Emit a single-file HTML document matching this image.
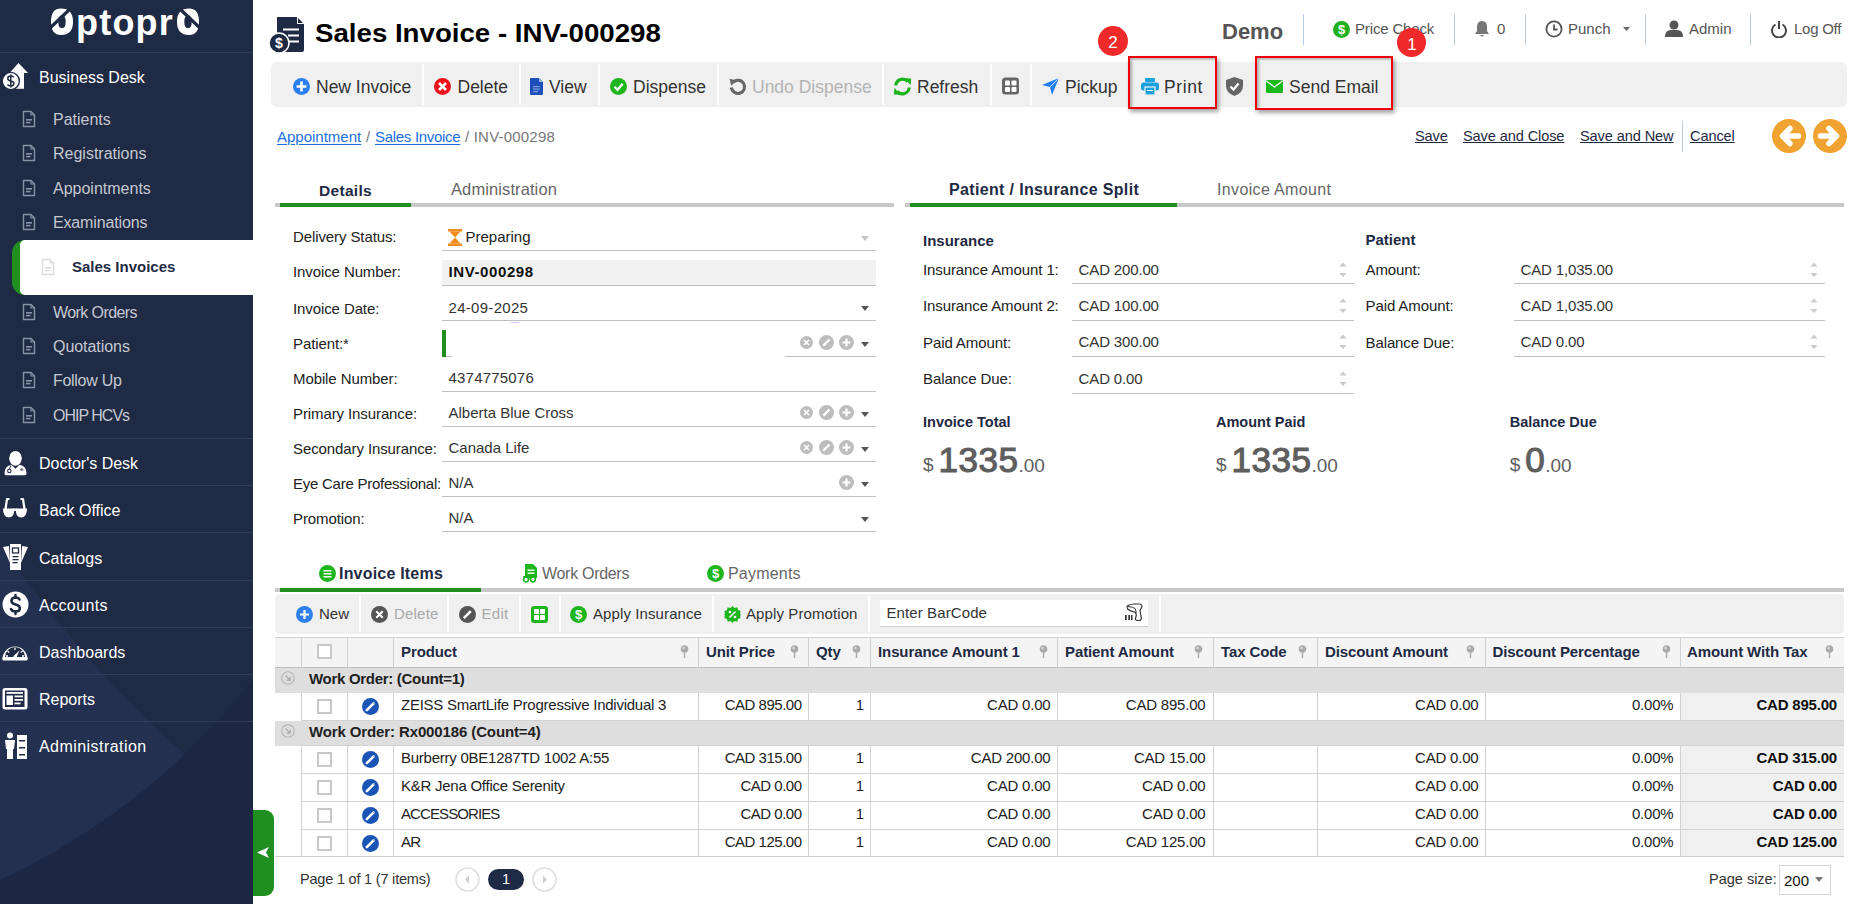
<!DOCTYPE html><html><head><meta charset="utf-8"><style>
html,body{margin:0;padding:0;width:1853px;height:904px;overflow:hidden;background:#fff;font-family:"Liberation Sans",sans-serif;}
.t{position:absolute;white-space:nowrap;}
.r{position:absolute;}
u{text-decoration:underline;text-underline-offset:2px;}
</style></head><body>
<div class="r" style="left:0;top:0;width:253px;height:904px;background:#1f2a44;overflow:hidden"><svg width="253" height="904" style="position:absolute;left:0;top:0"><path d="M0 545 Q120 715 253 808 L253 904 L0 904 Z" fill="#243050"/><path d="M0 880 Q150 810 253 679 L253 904 L0 904 Z" fill="#1d2744"/></svg></div>
<div class="t" style="left:76px;top:2.5px;font-size:36px;line-height:40px;font-weight:700;color:#fff;letter-spacing:1.2px">ptopr</div>
<svg class="r" style="left:50px;top:8px;" width="24" height="28" viewBox="0 0 24 28"><path fill-rule="evenodd" fill="#fff" d="M11 0.6 Q23 0.6 23 13.8 Q23 27 11 27 Q1 27 1 13.8 Q1 0.6 11 0.6 Z M12 7.3 Q15.7 7.3 15.7 13.8 Q15.7 20.3 12 20.3 Q8.3 20.3 8.3 13.8 Q8.3 7.3 12 7.3 Z"/><path d="M19.5 1.5 L0 20" stroke="#1f2a44" stroke-width="3.2"/></svg>
<svg class="r" style="left:176px;top:8px;" width="24" height="28" viewBox="0 0 24 28"><path fill-rule="evenodd" fill="#fff" d="M13 0.6 Q23 0.6 23 13.8 Q23 27 13 27 Q1 27 1 13.8 Q1 0.6 13 0.6 Z M12 7.3 Q15.7 7.3 15.7 13.8 Q15.7 20.3 12 20.3 Q8.3 20.3 8.3 13.8 Q8.3 7.3 12 7.3 Z"/><path d="M4.5 1.5 L24 20" stroke="#1f2a44" stroke-width="3.2"/></svg>
<div class="r" style="left:0px;top:52px;width:253px;height:1px;background:#2f3c5c;"></div>
<svg class="r" style="left:0px;top:62px;" width="28" height="28" viewBox="0 0 28 28"><path d="M18.5 1 L28 11 H24 V26.8 H13 V11 H9.5 Z" fill="#fff"/><circle cx="10.8" cy="19" r="8.6" fill="#fff" stroke="#1f2a44" stroke-width="1.4"/><path d="M13.8 15.3 Q13 14 10.8 14 Q7.8 14 7.8 16.4 Q7.8 18.3 10.8 18.9 Q13.9 19.5 13.9 21.6 Q13.9 24 10.8 24 Q8.3 24 7.5 22.4 M10.8 12.5 V25.5" fill="none" stroke="#1f2a44" stroke-width="1.5"/></svg>
<div class="t " style="left:39px;top:69.95px;font-size:16px;line-height:16px;color:#fff;">Business Desk</div>
<svg class="r" style="left:22px;top:110px;" width="14" height="18" viewBox="0 0 14 18"><path d="M1.5 1.5 H9 L12.5 5 V16.5 H1.5 Z" fill="none" stroke="#8a93a6" stroke-width="1.4" stroke-linejoin="round"/><path d="M9 1.5 V5 H12.5" fill="none" stroke="#8a93a6" stroke-width="1.2"/><rect x="4" y="9" width="6" height="1.6" fill="#8a93a6"/><rect x="4" y="11.8" width="4.5" height="1.6" fill="#8a93a6"/></svg>
<div class="t " style="left:53px;top:111.95px;font-size:16px;line-height:16px;color:#c4c8d2;">Patients</div>
<svg class="r" style="left:22px;top:144px;" width="14" height="18" viewBox="0 0 14 18"><path d="M1.5 1.5 H9 L12.5 5 V16.5 H1.5 Z" fill="none" stroke="#8a93a6" stroke-width="1.4" stroke-linejoin="round"/><path d="M9 1.5 V5 H12.5" fill="none" stroke="#8a93a6" stroke-width="1.2"/><rect x="4" y="9" width="6" height="1.6" fill="#8a93a6"/><rect x="4" y="11.8" width="4.5" height="1.6" fill="#8a93a6"/></svg>
<div class="t " style="left:53px;top:145.95px;font-size:16px;line-height:16px;color:#c4c8d2;">Registrations</div>
<svg class="r" style="left:22px;top:179px;" width="14" height="18" viewBox="0 0 14 18"><path d="M1.5 1.5 H9 L12.5 5 V16.5 H1.5 Z" fill="none" stroke="#8a93a6" stroke-width="1.4" stroke-linejoin="round"/><path d="M9 1.5 V5 H12.5" fill="none" stroke="#8a93a6" stroke-width="1.2"/><rect x="4" y="9" width="6" height="1.6" fill="#8a93a6"/><rect x="4" y="11.8" width="4.5" height="1.6" fill="#8a93a6"/></svg>
<div class="t " style="left:53px;top:180.95px;font-size:16px;line-height:16px;color:#c4c8d2;">Appointments</div>
<svg class="r" style="left:22px;top:213px;" width="14" height="18" viewBox="0 0 14 18"><path d="M1.5 1.5 H9 L12.5 5 V16.5 H1.5 Z" fill="none" stroke="#8a93a6" stroke-width="1.4" stroke-linejoin="round"/><path d="M9 1.5 V5 H12.5" fill="none" stroke="#8a93a6" stroke-width="1.2"/><rect x="4" y="9" width="6" height="1.6" fill="#8a93a6"/><rect x="4" y="11.8" width="4.5" height="1.6" fill="#8a93a6"/></svg>
<div class="t " style="left:53px;top:214.95px;font-size:16px;line-height:16px;color:#c4c8d2;letter-spacing:-0.15px;">Examinations</div>
<svg class="r" style="left:22px;top:303px;" width="14" height="18" viewBox="0 0 14 18"><path d="M1.5 1.5 H9 L12.5 5 V16.5 H1.5 Z" fill="none" stroke="#8a93a6" stroke-width="1.4" stroke-linejoin="round"/><path d="M9 1.5 V5 H12.5" fill="none" stroke="#8a93a6" stroke-width="1.2"/><rect x="4" y="9" width="6" height="1.6" fill="#8a93a6"/><rect x="4" y="11.8" width="4.5" height="1.6" fill="#8a93a6"/></svg>
<div class="t " style="left:53px;top:304.95px;font-size:16px;line-height:16px;color:#c4c8d2;letter-spacing:-0.58px;">Work Orders</div>
<svg class="r" style="left:22px;top:337px;" width="14" height="18" viewBox="0 0 14 18"><path d="M1.5 1.5 H9 L12.5 5 V16.5 H1.5 Z" fill="none" stroke="#8a93a6" stroke-width="1.4" stroke-linejoin="round"/><path d="M9 1.5 V5 H12.5" fill="none" stroke="#8a93a6" stroke-width="1.2"/><rect x="4" y="9" width="6" height="1.6" fill="#8a93a6"/><rect x="4" y="11.8" width="4.5" height="1.6" fill="#8a93a6"/></svg>
<div class="t " style="left:53px;top:338.95px;font-size:16px;line-height:16px;color:#c4c8d2;letter-spacing:-0.05px;">Quotations</div>
<svg class="r" style="left:22px;top:371px;" width="14" height="18" viewBox="0 0 14 18"><path d="M1.5 1.5 H9 L12.5 5 V16.5 H1.5 Z" fill="none" stroke="#8a93a6" stroke-width="1.4" stroke-linejoin="round"/><path d="M9 1.5 V5 H12.5" fill="none" stroke="#8a93a6" stroke-width="1.2"/><rect x="4" y="9" width="6" height="1.6" fill="#8a93a6"/><rect x="4" y="11.8" width="4.5" height="1.6" fill="#8a93a6"/></svg>
<div class="t " style="left:53px;top:372.95px;font-size:16px;line-height:16px;color:#c4c8d2;letter-spacing:-0.29px;">Follow Up</div>
<svg class="r" style="left:22px;top:406px;" width="14" height="18" viewBox="0 0 14 18"><path d="M1.5 1.5 H9 L12.5 5 V16.5 H1.5 Z" fill="none" stroke="#8a93a6" stroke-width="1.4" stroke-linejoin="round"/><path d="M9 1.5 V5 H12.5" fill="none" stroke="#8a93a6" stroke-width="1.2"/><rect x="4" y="9" width="6" height="1.6" fill="#8a93a6"/><rect x="4" y="11.8" width="4.5" height="1.6" fill="#8a93a6"/></svg>
<div class="t " style="left:53px;top:407.95px;font-size:16px;line-height:16px;color:#c4c8d2;letter-spacing:-1.0px;">OHIP HCVs</div>
<div class="r" style="left:12px;top:240px;width:30px;height:55px;background:#1f8f1f;border-radius:13px 0 0 13px"></div>
<div class="r" style="left:20px;top:240px;width:233px;height:55px;background:#fff;border-radius:5px 0 0 5px"></div>
<svg class="r" style="left:41px;top:258px;" width="14" height="18" viewBox="0 0 14 18"><path d="M1.5 1.5 H9 L12.5 5 V16.5 H1.5 Z" fill="none" stroke="#dcdcdc" stroke-width="1.4" stroke-linejoin="round"/><path d="M9 1.5 V5 H12.5" fill="none" stroke="#dcdcdc" stroke-width="1.2"/><rect x="4" y="9" width="6" height="1.6" fill="#dcdcdc"/><rect x="4" y="11.8" width="4.5" height="1.6" fill="#dcdcdc"/></svg>
<div class="t " style="left:72px;top:259.30px;font-size:15px;line-height:15px;color:#1f2a44;font-weight:700;">Sales Invoices</div>
<div class="r" style="left:0px;top:438px;width:253px;height:1px;background:#2f3c5c;"></div>
<div class="t " style="left:39px;top:455.95px;font-size:16px;line-height:16px;color:#fff;">Doctor's Desk</div>
<div class="r" style="left:0px;top:485px;width:253px;height:1px;background:#2f3c5c;"></div>
<div class="t " style="left:39px;top:502.95px;font-size:16px;line-height:16px;color:#fff;">Back Office</div>
<div class="r" style="left:0px;top:532px;width:253px;height:1px;background:#2f3c5c;"></div>
<div class="t " style="left:39px;top:550.95px;font-size:16px;line-height:16px;color:#fff;">Catalogs</div>
<div class="r" style="left:0px;top:580px;width:253px;height:1px;background:#2f3c5c;"></div>
<div class="t " style="left:39px;top:597.95px;font-size:16px;line-height:16px;color:#fff;letter-spacing:0.4px;">Accounts</div>
<div class="r" style="left:0px;top:627px;width:253px;height:1px;background:#2f3c5c;"></div>
<div class="t " style="left:39px;top:644.95px;font-size:16px;line-height:16px;color:#fff;">Dashboards</div>
<div class="r" style="left:0px;top:674px;width:253px;height:1px;background:#2f3c5c;"></div>
<div class="t " style="left:39px;top:691.95px;font-size:16px;line-height:16px;color:#fff;">Reports</div>
<div class="r" style="left:0px;top:721px;width:253px;height:1px;background:#2f3c5c;"></div>
<div class="t " style="left:39px;top:738.95px;font-size:16px;line-height:16px;color:#fff;letter-spacing:0.45px;">Administration</div>
<svg class="r" style="left:3px;top:449px;" width="25" height="28" viewBox="0 0 25 28"><ellipse cx="12.5" cy="9.3" rx="6.3" ry="7.4" fill="#fff"/><path d="M1.5 24.5 Q1.5 17 8.5 15.8 L12.5 19.8 L16.5 15.8 Q23.5 17 23.5 24.5 Q23.5 26.2 21.8 26.2 H3.2 Q1.5 26.2 1.5 24.5 Z" fill="#fff"/><circle cx="6.3" cy="22" r="1.7" fill="none" stroke="#1f2a44" stroke-width="1.1"/><path d="M6.3 20.3 L8 16.5" stroke="#1f2a44" stroke-width="0.9"/><circle cx="18.8" cy="20.5" r="1.6" fill="#1f2a44" fill-opacity="0.6"/></svg>
<svg class="r" style="left:2px;top:497px;" width="26" height="23" viewBox="0 0 26 23"><path d="M7.5 2 H5 L3.5 12" fill="none" stroke="#fff" stroke-width="2.2" stroke-linejoin="round"/><path d="M18.5 2 H21 L22.5 12" fill="none" stroke="#fff" stroke-width="2.2" stroke-linejoin="round"/><path d="M1 11.5 H12 Q13 20 7 20.5 Q1 20.5 1 11.5 Z" fill="#fff"/><path d="M14 11.5 H25 Q25 20.5 19 20.5 Q13 20 14 11.5 Z" fill="#fff"/><rect x="11" y="11.5" width="4" height="2.5" fill="#fff"/></svg>
<svg class="r" style="left:2px;top:543px;" width="27" height="28" viewBox="0 0 27 28"><path d="M1 4 L7 3 L8 20 Z" fill="#fff"/><path d="M26 4 L20 3 L19 20 Z" fill="#fff"/><rect x="8" y="1" width="11" height="26" fill="#fff"/><rect x="10.5" y="5" width="6" height="5" fill="none" stroke="#1f2a44" stroke-width="1.3"/><rect x="10.5" y="13" width="6" height="1.3" fill="#1f2a44"/><rect x="10.5" y="16" width="6" height="1.3" fill="#1f2a44"/><rect x="10.5" y="19" width="5" height="1.3" fill="#1f2a44"/></svg>
<svg class="r" style="left:1.5px;top:590.5px;" width="27" height="27" viewBox="0 0 27 27"><circle cx="13.5" cy="13.5" r="13" fill="#fff"/><path d="M17.5 8.5 Q16.5 6.5 13.5 6.5 Q9.5 6.5 9.5 9.8 Q9.5 12.6 13.5 13.5 Q17.8 14.4 17.8 17.3 Q17.8 20.5 13.5 20.5 Q10 20.5 9 18" fill="none" stroke="#1f2a44" stroke-width="2.6" stroke-linecap="round"/><path d="M13.5 4 V6.8 M13.5 20.2 V23" stroke="#1f2a44" stroke-width="2.4" stroke-linecap="round"/></svg>
<svg class="r" style="left:1px;top:640px;" width="28" height="22" viewBox="0 0 28 22"><path d="M1.5 19 A12.5 12.5 0 0 1 26.5 19 Z" fill="#fff"/><path d="M4 17 A10 10 0 0 1 24 17 Z" fill="#1f2a44"/><rect x="1.5" y="17" width="25" height="3.5" rx="1" fill="#fff"/><path d="M14 7.5 V10 M6.5 11 L8.2 12.5 M21.5 11 L19.8 12.5 M5 16 H7 M23 16 H21" stroke="#fff" stroke-width="1.3"/><path d="M12 16.5 L18.5 10.5 L15.5 17.5 Z" fill="#fff"/></svg>
<svg class="r" style="left:1px;top:686px;" width="28" height="25" viewBox="0 0 28 25"><rect x="1.5" y="2" width="25" height="21.5" rx="2.5" fill="#fff"/><rect x="4" y="4.5" width="19.5" height="16.5" fill="#1f2a44"/><rect x="5.5" y="6" width="16.5" height="1.8" fill="#fff"/><rect x="5.5" y="9.5" width="6.5" height="9.5" fill="#fff"/><rect x="13.5" y="9.5" width="8.5" height="1.8" fill="#fff"/><rect x="13.5" y="13" width="8.5" height="1.8" fill="#fff"/><rect x="13.5" y="16.5" width="6" height="1.8" fill="#fff"/></svg>
<svg class="r" style="left:2px;top:732px;" width="26" height="28" viewBox="0 0 26 28"><circle cx="8" cy="3.5" r="3" fill="#fff"/><path d="M3 8 H13 L12 17 H11 V27 H5 V17 H4 Z" fill="#fff"/><rect x="15" y="3" width="10" height="24" fill="#fff"/><rect x="17" y="8" width="6" height="1.5" fill="#1f2a44"/><rect x="17" y="15" width="6" height="1.5" fill="#1f2a44"/><rect x="17" y="22" width="6" height="1.5" fill="#1f2a44"/></svg>
<div class="r" style="left:253px;top:810px;width:21px;height:86px;background:#1f8f1f;border-radius:0 9px 9px 0"></div>
<svg class="r" style="left:256px;top:846px;" width="14" height="13" viewBox="0 0 14 13"><path d="M1 6.5 L13 1 L10 6.5 L13 12 Z" fill="#fff"/></svg>
<svg class="r" style="left:268px;top:16px;" width="37" height="37" viewBox="0 0 37 37"><path d="M9 1 H29 L36 8 V34 Q36 36 34 36 H11 Q9 36 9 34 Z" fill="#1f2a44"/><path d="M29 1 V8 H36" fill="#fff" opacity="0.9"/><path d="M29 1 L36 8 H29 Z" fill="#fff"/><path d="M30 2 L35 7 H30 Z" fill="#1f2a44"/><rect x="15" y="12.5" width="16" height="2" fill="#fff"/><rect x="20" y="18.5" width="11" height="2" fill="#fff"/><rect x="20" y="24.5" width="11" height="2" fill="#fff"/><circle cx="11" cy="27" r="10" fill="#1f2a44" stroke="#fff" stroke-width="1.5"/><text x="11" y="32" font-size="14" font-weight="700" font-family="Liberation Sans" text-anchor="middle" fill="#fff">$</text></svg>
<div class="t " style="left:315px;top:20.93px;font-size:25px;line-height:25px;color:#000;font-weight:700;transform:scaleX(1.106);transform-origin:0 0">Sales Invoice - INV-000298</div>
<div class="t " style="left:1222px;top:20.87px;font-size:22px;line-height:22px;color:#555;font-weight:700;">Demo</div>
<div class="r" style="left:1303px;top:14px;width:1px;height:31px;background:#b9cbe6;"></div>
<div class="r" style="left:1454px;top:14px;width:1px;height:31px;background:#b9cbe6;"></div>
<div class="r" style="left:1525px;top:14px;width:1px;height:31px;background:#b9cbe6;"></div>
<div class="r" style="left:1645px;top:14px;width:1px;height:31px;background:#b9cbe6;"></div>
<div class="r" style="left:1750px;top:14px;width:1px;height:31px;background:#b9cbe6;"></div>
<svg class="r" style="left:1333px;top:21px;" width="17" height="17" viewBox="0 0 17 17"><circle cx="8.5" cy="8.5" r="8.5" fill="#20b020"/><text x="8.5" y="13" font-size="13" font-weight="700" font-family="Liberation Sans" text-anchor="middle" fill="#fff">$</text></svg>
<div class="t " style="left:1355px;top:21.30px;font-size:15px;line-height:15px;color:#555;letter-spacing:-0.15px;">Price Check</div>
<svg class="r" style="left:1474px;top:20px;" width="16" height="18" viewBox="0 0 16 18"><path d="M8 1 Q13 1 13 7 V11 L15 14 H1 L3 11 V7 Q3 1 8 1 Z" fill="#777"/><path d="M6 15 Q8 18 10 15 Z" fill="#777"/></svg>
<div class="t " style="left:1497px;top:21.30px;font-size:15px;line-height:15px;color:#555;">0</div>
<svg class="r" style="left:1545px;top:20px;" width="18" height="18" viewBox="0 0 18 18"><circle cx="9" cy="9" r="7.6" fill="none" stroke="#555" stroke-width="1.8"/><path d="M9 4.5 V9.5 H12.5" fill="none" stroke="#555" stroke-width="1.8"/></svg>
<div class="t " style="left:1568px;top:21.30px;font-size:15px;line-height:15px;color:#555;">Punch</div>
<svg class="r" style="left:1623px;top:27px;" width="7" height="4" viewBox="0 0 7 4"><path d="M0 0 H7 L3.5 4 Z" fill="#666"/></svg>
<svg class="r" style="left:1665px;top:20px;" width="18" height="18" viewBox="0 0 18 18"><circle cx="9" cy="5" r="4.5" fill="#555"/><path d="M0 17 Q0 10 6 10 H12 Q18 10 18 17 Z" fill="#555"/></svg>
<div class="t " style="left:1689px;top:21.30px;font-size:15px;line-height:15px;color:#555;">Admin</div>
<svg class="r" style="left:1770px;top:20px;" width="18" height="18" viewBox="0 0 18 18"><path d="M5.5 4.5 A7 7 0 1 0 12.5 4.5" fill="none" stroke="#444" stroke-width="2"/><path d="M9 1 V9" stroke="#444" stroke-width="2"/></svg>
<div class="t " style="left:1794px;top:21.30px;font-size:15px;line-height:15px;color:#555;letter-spacing:-0.25px;">Log Off</div>
<div class="r" style="left:271px;top:62px;width:1576px;height:45px;background:#f0f0f0;border-radius:6px"></div>
<div class="r" style="left:422px;top:64px;width:2px;height:41px;background:#fff;"></div>
<div class="r" style="left:519px;top:64px;width:2px;height:41px;background:#fff;"></div>
<div class="r" style="left:598px;top:64px;width:2px;height:41px;background:#fff;"></div>
<div class="r" style="left:717px;top:64px;width:2px;height:41px;background:#fff;"></div>
<div class="r" style="left:882px;top:64px;width:2px;height:41px;background:#fff;"></div>
<div class="r" style="left:990px;top:64px;width:2px;height:41px;background:#fff;"></div>
<div class="r" style="left:1030px;top:64px;width:2px;height:41px;background:#fff;"></div>
<svg class="r" style="left:293px;top:78px;" width="17" height="17" viewBox="0 0 17 17"><circle cx="8.5" cy="8.5" r="8.5" fill="#2a7fee"/><path d="M8.5 3.6 V13.4 M3.6 8.5 H13.4" stroke="#fff" stroke-width="2.6"/></svg>
<div class="t " style="left:316px;top:78.68px;font-size:17.5px;line-height:17.5px;color:#333;">New Invoice</div>
<svg class="r" style="left:434px;top:78px;" width="17" height="17" viewBox="0 0 17 17"><circle cx="8.5" cy="8.5" r="8.5" fill="#f0101a"/><path d="M5 5 L12 12 M12 5 L5 12" stroke="#fff" stroke-width="2.7"/></svg>
<div class="t " style="left:457.5px;top:78.68px;font-size:17.5px;line-height:17.5px;color:#333;">Delete</div>
<svg class="r" style="left:530px;top:78px;" width="13" height="17" viewBox="0 0 13 17"><path d="M0 1 Q0 0 1 0 H9 L13 4 V16 Q13 17 12 17 H1 Q0 17 0 16 Z" fill="#1d4fb8"/><path d="M9 0 V4 H13" fill="#9ab4e6"/><rect x="3" y="8" width="7" height="1.2" fill="#7f9fe0"/><rect x="3" y="10.5" width="7" height="1.2" fill="#7f9fe0"/><rect x="3" y="13" width="5" height="1.2" fill="#7f9fe0"/></svg>
<div class="t " style="left:549px;top:78.68px;font-size:17.5px;line-height:17.5px;color:#333;">View</div>
<svg class="r" style="left:610px;top:78px;" width="17" height="17" viewBox="0 0 17 17"><circle cx="8.5" cy="8.5" r="8.5" fill="#1fb51f"/><path d="M4.5 8.8 L7.5 11.8 L12.7 5.8" fill="none" stroke="#fff" stroke-width="2.3"/></svg>
<div class="t " style="left:633px;top:78.68px;font-size:17.5px;line-height:17.5px;color:#333;">Dispense</div>
<svg class="r" style="left:729px;top:77.5px;" width="18" height="18" viewBox="0 0 18 18"><path d="M4.2 4.2 A6.6 6.6 0 1 1 2.4 9.5" fill="none" stroke="#666" stroke-width="3"/><path d="M0.6 0.8 L7.6 2.4 L2.2 7.8 Z" fill="#666"/></svg>
<div class="t " style="left:752px;top:78.68px;font-size:17.5px;line-height:17.5px;color:#b4b4b4;">Undo Dispense</div>
<svg class="r" style="left:893px;top:77px;" width="19" height="19" viewBox="0 0 19 19"><path d="M2.8 8.5 A6.8 6.8 0 0 1 14.8 4.6" fill="none" stroke="#1db31d" stroke-width="3.2"/><path d="M11.5 1.2 L18.2 1.5 L17.6 8.2 Z" fill="#1db31d"/><path d="M16.2 10.5 A6.8 6.8 0 0 1 4.2 14.4" fill="none" stroke="#1db31d" stroke-width="3.2"/><path d="M7.5 17.8 L0.8 17.5 L1.4 10.8 Z" fill="#1db31d"/></svg>
<div class="t " style="left:917px;top:78.68px;font-size:17.5px;line-height:17.5px;color:#333;">Refresh</div>
<svg class="r" style="left:1002px;top:77px;" width="17" height="18" viewBox="0 0 17 18"><rect x="0" y="0.5" width="17" height="17" rx="3.5" fill="#666"/><rect x="3" y="3.5" width="5" height="5" rx="1" fill="#fff"/><rect x="9.5" y="3.5" width="5" height="5" rx="1" fill="#fff"/><rect x="3" y="10" width="5" height="5" rx="1" fill="#fff"/><rect x="9.5" y="10" width="5" height="5" rx="1" fill="#fff"/></svg>
<svg class="r" style="left:1042px;top:78px;" width="17" height="17" viewBox="0 0 17 17"><path d="M0 7 L17 0 L10 17 L8 9 Z" fill="#1e7ef2"/><path d="M8 9 L17 0" stroke="#fff" stroke-width="0.8"/></svg>
<div class="t " style="left:1065px;top:78.68px;font-size:17.5px;line-height:17.5px;color:#333;">Pickup</div>
<svg class="r" style="left:1141px;top:78px;" width="18" height="17" viewBox="0 0 18 17"><rect x="4" y="0" width="10" height="4" rx="1" fill="#1ba0dc"/><rect x="0" y="4.5" width="18" height="8" rx="2.5" fill="#1ba0dc"/><rect x="4" y="9" width="10" height="8" fill="#1ba0dc" stroke="#f0f0f0" stroke-width="1.2"/><rect x="6" y="12" width="6" height="1" fill="#fff"/></svg>
<div class="t " style="left:1164px;top:78.68px;font-size:17.5px;line-height:17.5px;color:#333;letter-spacing:0.6px;">Print</div>
<svg class="r" style="left:1226px;top:77px;" width="17" height="19" viewBox="0 0 17 19"><path d="M8.5 0 L17 3 V9 Q17 16 8.5 19 Q0 16 0 9 V3 Z" fill="#666"/><path d="M4.5 9.5 L7.5 12.5 L12.5 6.5" fill="none" stroke="#fff" stroke-width="2.2"/></svg>
<svg class="r" style="left:1266px;top:80px;" width="17" height="13" viewBox="0 0 17 13"><rect x="0" y="0" width="17" height="13" rx="1.5" fill="#1db81d"/><path d="M0.5 1 L8.5 7 L16.5 1" fill="none" stroke="#fff" stroke-width="1.2"/></svg>
<div class="t " style="left:1289px;top:78.68px;font-size:17.5px;line-height:17.5px;color:#333;">Send Email</div>
<div class="r" style="left:1128px;top:56px;width:85px;height:49px;border:2px solid #f00008;box-shadow:2px 3px 4px rgba(0,0,0,0.35), inset 2px 2px 3px rgba(0,0,0,0.3)"></div>
<div class="r" style="left:1255px;top:56px;width:134px;height:50px;border:2px solid #f00008;box-shadow:2px 3px 4px rgba(0,0,0,0.35), inset 2px 2px 3px rgba(0,0,0,0.3)"></div>
<div class="r" style="left:1098px;top:26px;width:30px;height:30px;border-radius:50%;background:#f02a2a"></div>
<div class="t " style="left:1106px;top:34.11px;font-size:17px;line-height:17px;color:#fff;width:14px;text-align:center">2</div>
<div class="r" style="left:1397px;top:28px;width:29px;height:29px;border-radius:50%;background:#f02a2a"></div>
<div class="t " style="left:1405px;top:35.61px;font-size:17px;line-height:17px;color:#fff;width:14px;text-align:center">1</div>
<div class="t " style="left:277px;top:129.30px;font-size:15px;line-height:15px;color:#1a6fe0;"><u>Appointment</u></div>
<div class="t " style="left:366px;top:129.30px;font-size:15px;line-height:15px;color:#777;">/</div>
<div class="t " style="left:375px;top:129.30px;font-size:15px;line-height:15px;color:#1a6fe0;letter-spacing:-0.3px;"><u>Sales Invoice</u></div>
<div class="t " style="left:465px;top:129.30px;font-size:15px;line-height:15px;color:#777;letter-spacing:0.2px;">/ INV-000298</div>
<div class="t " style="left:1415px;top:129.14px;font-size:14.6px;line-height:14.6px;color:#1f2a44;letter-spacing:-0.12px;"><u style="text-underline-offset:1px">Save</u></div>
<div class="t " style="left:1463px;top:129.14px;font-size:14.6px;line-height:14.6px;color:#1f2a44;letter-spacing:-0.12px;"><u style="text-underline-offset:1px">Save and Close</u></div>
<div class="t " style="left:1580px;top:129.14px;font-size:14.6px;line-height:14.6px;color:#1f2a44;letter-spacing:-0.12px;"><u style="text-underline-offset:1px">Save and New</u></div>
<div class="t " style="left:1690px;top:129.14px;font-size:14.6px;line-height:14.6px;color:#1f2a44;letter-spacing:-0.12px;"><u style="text-underline-offset:1px">Cancel</u></div>
<div class="r" style="left:1682px;top:121px;width:1px;height:31px;background:#b9cbe6;"></div>
<svg class="r" style="left:1772px;top:119px;" width="34" height="34" viewBox="0 0 34 34"><circle cx="17" cy="17" r="17" fill="#f0a330"/><path d="M26.5 17 H12 M18 9.5 L10.5 17 L18 24.5" fill="none" stroke="#fff" stroke-width="5.5" stroke-linecap="round" stroke-linejoin="round"/></svg>
<svg class="r" style="left:1813px;top:119px;" width="34" height="34" viewBox="0 0 34 34"><circle cx="17" cy="17" r="17" fill="#f0a330"/><path d="M7.5 17 H22 M16 9.5 L23.5 17 L16 24.5" fill="none" stroke="#fff" stroke-width="5.5" stroke-linecap="round" stroke-linejoin="round"/></svg>
<div class="r" style="left:275px;top:203px;width:619px;height:4px;background:#c8c8c8;"></div>
<div class="r" style="left:280px;top:203px;width:131px;height:4px;background:#1f8f1f;"></div>
<div class="t " style="left:319px;top:182.88px;font-size:15.5px;line-height:15.5px;color:#1f2a44;font-weight:700;letter-spacing:0.3px;">Details</div>
<div class="t " style="left:451px;top:181.03px;font-size:16.5px;line-height:16.5px;color:#666;letter-spacing:0.1px;">Administration</div>
<div class="t " style="left:293px;top:229.30px;font-size:15px;line-height:15px;color:#222;letter-spacing:-0.1px;">Delivery Status:</div>
<div class="t " style="left:293px;top:264.30px;font-size:15px;line-height:15px;color:#222;letter-spacing:-0.1px;">Invoice Number:</div>
<div class="t " style="left:293px;top:300.80px;font-size:15px;line-height:15px;color:#222;letter-spacing:-0.1px;">Invoice Date:</div>
<div class="t " style="left:293px;top:335.80px;font-size:15px;line-height:15px;color:#222;letter-spacing:-0.1px;">Patient:*</div>
<div class="t " style="left:293px;top:371.30px;font-size:15px;line-height:15px;color:#222;letter-spacing:-0.1px;">Mobile Number:</div>
<div class="t " style="left:293px;top:406.30px;font-size:15px;line-height:15px;color:#222;letter-spacing:-0.1px;">Primary Insurance:</div>
<div class="t " style="left:293px;top:441.30px;font-size:15px;line-height:15px;color:#222;letter-spacing:-0.1px;">Secondary Insurance:</div>
<div class="t " style="left:293px;top:476.30px;font-size:15px;line-height:15px;color:#222;letter-spacing:-0.25px;">Eye Care Professional:</div>
<div class="t " style="left:293px;top:511.30px;font-size:15px;line-height:15px;color:#222;letter-spacing:-0.1px;">Promotion:</div>
<div class="r" style="left:442px;top:250px;width:434px;height:1.3px;background:#bfbfbf;"></div>
<div class="r" style="left:442px;top:285px;width:434px;height:1.3px;background:#bfbfbf;"></div>
<div class="r" style="left:442px;top:320px;width:434px;height:1.3px;background:#bfbfbf;"></div>
<div class="r" style="left:442px;top:391px;width:434px;height:1.3px;background:#bfbfbf;"></div>
<div class="r" style="left:442px;top:426px;width:434px;height:1.3px;background:#bfbfbf;"></div>
<div class="r" style="left:442px;top:461px;width:434px;height:1.3px;background:#bfbfbf;"></div>
<div class="r" style="left:442px;top:496px;width:434px;height:1.3px;background:#bfbfbf;"></div>
<div class="r" style="left:442px;top:531px;width:434px;height:1.3px;background:#bfbfbf;"></div>
<div class="r" style="left:442px;top:260px;width:434px;height:25px;background:#f2f2f2;"></div>
<div class="r" style="left:785px;top:356px;width:91px;height:1.3px;background:#bfbfbf;"></div>
<div class="r" style="left:442px;top:330px;width:4px;height:27px;background:#1f8f1f;"></div>
<div class="r" style="left:511px;top:322px;width:8px;height:1px;background:#eab8ff;"></div>
<div class="r" style="left:446px;top:356px;width:6px;height:1px;background:#bfbfbf;"></div>
<svg class="r" style="left:448px;top:229px;" width="14" height="17" viewBox="0 0 14 17"><rect x="0" y="0" width="14" height="2.5" fill="#f08c1e"/><rect x="0" y="14.5" width="14" height="2.5" fill="#f08c1e"/><path d="M1.5 2.5 H12.5 L7 8.5 L12.5 14.5 H1.5 L7 8.5 Z" fill="#f08c1e"/></svg>
<div class="t " style="left:465.5px;top:229.30px;font-size:15px;line-height:15px;color:#222;">Preparing</div>
<div class="t " style="left:448.5px;top:264.30px;font-size:15px;line-height:15px;color:#111;font-weight:700;letter-spacing:0.6px;">INV-000298</div>
<div class="t " style="left:448.5px;top:299.80px;font-size:15px;line-height:15px;color:#333;letter-spacing:0.3px;">24-09-2025</div>
<div class="t " style="left:448.5px;top:369.80px;font-size:15px;line-height:15px;color:#333;letter-spacing:0.2px;">4374775076</div>
<div class="t " style="left:448.5px;top:405.30px;font-size:15px;line-height:15px;color:#333;">Alberta Blue Cross</div>
<div class="t " style="left:448.5px;top:440.30px;font-size:15px;line-height:15px;color:#333;">Canada Life</div>
<div class="t " style="left:448.5px;top:475.30px;font-size:15px;line-height:15px;color:#333;">N/A</div>
<div class="t " style="left:448.5px;top:510.30px;font-size:15px;line-height:15px;color:#333;">N/A</div>
<svg class="r" style="left:860.5px;top:236px;" width="8" height="5" viewBox="0 0 8 5"><path d="M0 0 H8 L4 5 Z" fill="#c4c4c4"/></svg>
<svg class="r" style="left:860.5px;top:306px;" width="8" height="5" viewBox="0 0 8 5"><path d="M0 0 H8 L4 5 Z" fill="#555"/></svg>
<svg class="r" style="left:860.5px;top:341.5px;" width="8" height="5" viewBox="0 0 8 5"><path d="M0 0 H8 L4 5 Z" fill="#555"/></svg>
<svg class="r" style="left:860.5px;top:411.5px;" width="8" height="5" viewBox="0 0 8 5"><path d="M0 0 H8 L4 5 Z" fill="#555"/></svg>
<svg class="r" style="left:860.5px;top:446.5px;" width="8" height="5" viewBox="0 0 8 5"><path d="M0 0 H8 L4 5 Z" fill="#555"/></svg>
<svg class="r" style="left:860.5px;top:481.5px;" width="8" height="5" viewBox="0 0 8 5"><path d="M0 0 H8 L4 5 Z" fill="#555"/></svg>
<svg class="r" style="left:860.5px;top:516.5px;" width="8" height="5" viewBox="0 0 8 5"><path d="M0 0 H8 L4 5 Z" fill="#555"/></svg>
<svg class="r" style="left:800px;top:336.0px;" width="13" height="13" viewBox="0 0 13 13"><circle cx="6.5" cy="6.5" r="6.5" fill="#bdbdbd"/><path d="M4 4 L9 9 M9 4 L4 9" stroke="#fff" stroke-width="1.6"/></svg>
<svg class="r" style="left:819px;top:334.5px;" width="15" height="15" viewBox="0 0 15 15"><circle cx="7.5" cy="7.5" r="7.5" fill="#bdbdbd"/><path d="M4.3 10.7 L10.5 4.5" stroke="#fff" stroke-width="2.4"/></svg>
<svg class="r" style="left:839px;top:334.5px;" width="15" height="15" viewBox="0 0 15 15"><circle cx="7.5" cy="7.5" r="7.5" fill="#bdbdbd"/><path d="M7.5 3.5 V11.5 M3.5 7.5 H11.5" stroke="#fff" stroke-width="2.2"/></svg>
<svg class="r" style="left:800px;top:406.0px;" width="13" height="13" viewBox="0 0 13 13"><circle cx="6.5" cy="6.5" r="6.5" fill="#bdbdbd"/><path d="M4 4 L9 9 M9 4 L4 9" stroke="#fff" stroke-width="1.6"/></svg>
<svg class="r" style="left:819px;top:404.5px;" width="15" height="15" viewBox="0 0 15 15"><circle cx="7.5" cy="7.5" r="7.5" fill="#bdbdbd"/><path d="M4.3 10.7 L10.5 4.5" stroke="#fff" stroke-width="2.4"/></svg>
<svg class="r" style="left:839px;top:404.5px;" width="15" height="15" viewBox="0 0 15 15"><circle cx="7.5" cy="7.5" r="7.5" fill="#bdbdbd"/><path d="M7.5 3.5 V11.5 M3.5 7.5 H11.5" stroke="#fff" stroke-width="2.2"/></svg>
<svg class="r" style="left:800px;top:441.0px;" width="13" height="13" viewBox="0 0 13 13"><circle cx="6.5" cy="6.5" r="6.5" fill="#bdbdbd"/><path d="M4 4 L9 9 M9 4 L4 9" stroke="#fff" stroke-width="1.6"/></svg>
<svg class="r" style="left:819px;top:439.5px;" width="15" height="15" viewBox="0 0 15 15"><circle cx="7.5" cy="7.5" r="7.5" fill="#bdbdbd"/><path d="M4.3 10.7 L10.5 4.5" stroke="#fff" stroke-width="2.4"/></svg>
<svg class="r" style="left:839px;top:439.5px;" width="15" height="15" viewBox="0 0 15 15"><circle cx="7.5" cy="7.5" r="7.5" fill="#bdbdbd"/><path d="M7.5 3.5 V11.5 M3.5 7.5 H11.5" stroke="#fff" stroke-width="2.2"/></svg>
<svg class="r" style="left:839px;top:474.5px;" width="15" height="15" viewBox="0 0 15 15"><circle cx="7.5" cy="7.5" r="7.5" fill="#bdbdbd"/><path d="M7.5 3.5 V11.5 M3.5 7.5 H11.5" stroke="#fff" stroke-width="2.2"/></svg>
<div class="r" style="left:905px;top:203px;width:939px;height:4px;background:#c8c8c8;"></div>
<div class="r" style="left:910px;top:203px;width:267px;height:4px;background:#1f8f1f;"></div>
<div class="t " style="left:949px;top:181.95px;font-size:16px;line-height:16px;color:#1f2a44;font-weight:700;letter-spacing:0.35px;">Patient / Insurance Split</div>
<div class="t " style="left:1217px;top:181.95px;font-size:16px;line-height:16px;color:#666;letter-spacing:0.35px;">Invoice Amount</div>
<div class="t " style="left:923px;top:232.60px;font-size:15px;line-height:15px;color:#1f2a44;font-weight:700;">Insurance</div>
<div class="t " style="left:1365.5px;top:232.30px;font-size:15px;line-height:15px;color:#1f2a44;font-weight:700;">Patient</div>
<div class="t " style="left:923px;top:262.30px;font-size:15px;line-height:15px;color:#222;letter-spacing:-0.1px;">Insurance Amount 1:</div>
<div class="t " style="left:1078.6px;top:261.80px;font-size:15px;line-height:15px;color:#333;letter-spacing:-0.15px;">CAD 200.00</div>
<div class="r" style="left:1072px;top:283px;width:282px;height:1.3px;background:#bfbfbf;"></div>
<svg class="r" style="left:1339px;top:261.5px;" width="8" height="16" viewBox="0 0 8 16"><path d="M0.3 4.6 L4 0.5 L7.7 4.6 Z" fill="#cbcbcb"/><path d="M0.3 10.9 L4 15 L7.7 10.9 Z" fill="#cbcbcb"/></svg>
<div class="t " style="left:923px;top:298.30px;font-size:15px;line-height:15px;color:#222;letter-spacing:-0.1px;">Insurance Amount 2:</div>
<div class="t " style="left:1078.6px;top:297.80px;font-size:15px;line-height:15px;color:#333;letter-spacing:-0.15px;">CAD 100.00</div>
<div class="r" style="left:1072px;top:320px;width:282px;height:1.3px;background:#bfbfbf;"></div>
<svg class="r" style="left:1339px;top:297.5px;" width="8" height="16" viewBox="0 0 8 16"><path d="M0.3 4.6 L4 0.5 L7.7 4.6 Z" fill="#cbcbcb"/><path d="M0.3 10.9 L4 15 L7.7 10.9 Z" fill="#cbcbcb"/></svg>
<div class="t " style="left:923px;top:334.80px;font-size:15px;line-height:15px;color:#222;letter-spacing:-0.1px;">Paid Amount:</div>
<div class="t " style="left:1078.6px;top:334.30px;font-size:15px;line-height:15px;color:#333;letter-spacing:-0.15px;">CAD 300.00</div>
<div class="r" style="left:1072px;top:356px;width:282px;height:1.3px;background:#bfbfbf;"></div>
<svg class="r" style="left:1339px;top:334px;" width="8" height="16" viewBox="0 0 8 16"><path d="M0.3 4.6 L4 0.5 L7.7 4.6 Z" fill="#cbcbcb"/><path d="M0.3 10.9 L4 15 L7.7 10.9 Z" fill="#cbcbcb"/></svg>
<div class="t " style="left:923px;top:371.30px;font-size:15px;line-height:15px;color:#222;letter-spacing:-0.1px;">Balance Due:</div>
<div class="t " style="left:1078.6px;top:370.80px;font-size:15px;line-height:15px;color:#333;letter-spacing:-0.15px;">CAD 0.00</div>
<div class="r" style="left:1072px;top:393px;width:282px;height:1.3px;background:#bfbfbf;"></div>
<svg class="r" style="left:1339px;top:370.5px;" width="8" height="16" viewBox="0 0 8 16"><path d="M0.3 4.6 L4 0.5 L7.7 4.6 Z" fill="#cbcbcb"/><path d="M0.3 10.9 L4 15 L7.7 10.9 Z" fill="#cbcbcb"/></svg>
<div class="t " style="left:1365.5px;top:262.30px;font-size:15px;line-height:15px;color:#222;letter-spacing:-0.1px;">Amount:</div>
<div class="t " style="left:1520.5px;top:261.80px;font-size:15px;line-height:15px;color:#333;letter-spacing:-0.15px;">CAD 1,035.00</div>
<div class="r" style="left:1514px;top:283px;width:311px;height:1.3px;background:#bfbfbf;"></div>
<svg class="r" style="left:1810px;top:261.5px;" width="8" height="16" viewBox="0 0 8 16"><path d="M0.3 4.6 L4 0.5 L7.7 4.6 Z" fill="#cbcbcb"/><path d="M0.3 10.9 L4 15 L7.7 10.9 Z" fill="#cbcbcb"/></svg>
<div class="t " style="left:1365.5px;top:298.30px;font-size:15px;line-height:15px;color:#222;letter-spacing:-0.1px;">Paid Amount:</div>
<div class="t " style="left:1520.5px;top:297.80px;font-size:15px;line-height:15px;color:#333;letter-spacing:-0.15px;">CAD 1,035.00</div>
<div class="r" style="left:1514px;top:320px;width:311px;height:1.3px;background:#bfbfbf;"></div>
<svg class="r" style="left:1810px;top:297.5px;" width="8" height="16" viewBox="0 0 8 16"><path d="M0.3 4.6 L4 0.5 L7.7 4.6 Z" fill="#cbcbcb"/><path d="M0.3 10.9 L4 15 L7.7 10.9 Z" fill="#cbcbcb"/></svg>
<div class="t " style="left:1365.5px;top:334.80px;font-size:15px;line-height:15px;color:#222;letter-spacing:-0.1px;">Balance Due:</div>
<div class="t " style="left:1520.5px;top:334.30px;font-size:15px;line-height:15px;color:#333;letter-spacing:-0.15px;">CAD 0.00</div>
<div class="r" style="left:1514px;top:356px;width:311px;height:1.3px;background:#bfbfbf;"></div>
<svg class="r" style="left:1810px;top:334px;" width="8" height="16" viewBox="0 0 8 16"><path d="M0.3 4.6 L4 0.5 L7.7 4.6 Z" fill="#cbcbcb"/><path d="M0.3 10.9 L4 15 L7.7 10.9 Z" fill="#cbcbcb"/></svg>
<div class="t " style="left:923px;top:415.02px;font-size:14.5px;line-height:14.5px;color:#1f2a44;font-weight:700;">Invoice Total</div>
<div class="t" style="left:923px;top:441.57px;font-size:35px;line-height:35px;color:#5e5e5e;font-weight:400;-webkit-text-stroke:1.1px #5e5e5e;letter-spacing:0.5px"><span style="font-size:19px;-webkit-text-stroke:0;letter-spacing:0;margin-right:5px;position:relative;top:-1px">$</span>1335<span style="font-size:19px;-webkit-text-stroke:0;letter-spacing:0">.00</span></div>
<div class="t " style="left:1216px;top:415.02px;font-size:14.5px;line-height:14.5px;color:#1f2a44;font-weight:700;">Amount Paid</div>
<div class="t" style="left:1216px;top:441.57px;font-size:35px;line-height:35px;color:#5e5e5e;font-weight:400;-webkit-text-stroke:1.1px #5e5e5e;letter-spacing:0.5px"><span style="font-size:19px;-webkit-text-stroke:0;letter-spacing:0;margin-right:5px;position:relative;top:-1px">$</span>1335<span style="font-size:19px;-webkit-text-stroke:0;letter-spacing:0">.00</span></div>
<div class="t " style="left:1509.7px;top:415.02px;font-size:14.5px;line-height:14.5px;color:#1f2a44;font-weight:700;">Balance Due</div>
<div class="t" style="left:1509.7px;top:441.57px;font-size:35px;line-height:35px;color:#5e5e5e;font-weight:400;-webkit-text-stroke:1.1px #5e5e5e;letter-spacing:0.5px"><span style="font-size:19px;-webkit-text-stroke:0;letter-spacing:0;margin-right:5px;position:relative;top:-1px">$</span>0<span style="font-size:19px;-webkit-text-stroke:0;letter-spacing:0">.00</span></div>
<div class="r" style="left:275px;top:588px;width:1569px;height:4px;background:#c8c8c8;"></div>
<div class="r" style="left:280px;top:588px;width:201px;height:4px;background:#1f8f1f;"></div>
<svg class="r" style="left:319px;top:565px;" width="17" height="17" viewBox="0 0 17 17"><circle cx="8.5" cy="8.5" r="8.5" fill="#1fb51f"/><rect x="4.5" y="5" width="8" height="1.5" fill="#fff"/><rect x="4.5" y="8" width="8" height="1.5" fill="#fff"/><rect x="4.5" y="11" width="8" height="1.5" fill="#fff"/></svg>
<div class="t " style="left:339px;top:566.45px;font-size:16px;line-height:16px;color:#1f2a44;font-weight:700;letter-spacing:0.2px;">Invoice Items</div>
<svg class="r" style="left:521px;top:564px;" width="17" height="19" viewBox="0 0 17 19"><path d="M4 0 H12 L16 4 V14 H4 Z" fill="#1fb51f"/><rect x="6.5" y="5.5" width="7" height="1.4" fill="#fff"/><rect x="6.5" y="8.5" width="7" height="1.4" fill="#fff"/><rect x="2" y="12" width="14" height="1.4" fill="#1fb51f"/><circle cx="5" cy="15.5" r="2.4" fill="#fff" stroke="#1fb51f" stroke-width="1.5"/><circle cx="12" cy="15.5" r="2.4" fill="#fff" stroke="#1fb51f" stroke-width="1.5"/><path d="M7.4 15 H9.6" stroke="#1fb51f" stroke-width="1.2"/></svg>
<div class="t " style="left:542px;top:566.45px;font-size:16px;line-height:16px;color:#666;letter-spacing:-0.3px;">Work Orders</div>
<svg class="r" style="left:707px;top:565px;" width="17" height="17" viewBox="0 0 17 17"><circle cx="8.5" cy="8.5" r="8.5" fill="#1fb51f"/><text x="8.5" y="13" font-size="13" font-weight="700" font-family="Liberation Sans" text-anchor="middle" fill="#fff">$</text></svg>
<div class="t " style="left:728px;top:566.45px;font-size:16px;line-height:16px;color:#666;letter-spacing:0.2px;">Payments</div>
<div class="r" style="left:275px;top:594px;width:1569px;height:40px;background:#f0f0f0;border-radius:5px"></div>
<div class="r" style="left:359px;top:596px;width:2px;height:36px;background:#fff;"></div>
<div class="r" style="left:447px;top:596px;width:2px;height:36px;background:#fff;"></div>
<div class="r" style="left:519px;top:596px;width:2px;height:36px;background:#fff;"></div>
<div class="r" style="left:559px;top:596px;width:2px;height:36px;background:#fff;"></div>
<div class="r" style="left:712px;top:596px;width:2px;height:36px;background:#fff;"></div>
<div class="r" style="left:868px;top:596px;width:2px;height:36px;background:#fff;"></div>
<div class="r" style="left:1159px;top:596px;width:2px;height:36px;background:#fff;"></div>
<svg class="r" style="left:296px;top:606px;" width="17" height="17" viewBox="0 0 17 17"><circle cx="8.5" cy="8.5" r="8.5" fill="#2f80ed"/><path d="M8.5 4 V13 M4 8.5 H13" stroke="#fff" stroke-width="2.2"/></svg>
<div class="t " style="left:319px;top:605.80px;font-size:15px;line-height:15px;color:#333;">New</div>
<svg class="r" style="left:371px;top:606px;" width="17" height="17" viewBox="0 0 17 17"><circle cx="8.5" cy="8.5" r="8.5" fill="#555"/><path d="M5.3 5.3 L11.7 11.7 M11.7 5.3 L5.3 11.7" stroke="#fff" stroke-width="2"/></svg>
<div class="t " style="left:394px;top:605.80px;font-size:15px;line-height:15px;color:#aaa;letter-spacing:0.2px;">Delete</div>
<svg class="r" style="left:459px;top:606px;" width="17" height="17" viewBox="0 0 17 17"><circle cx="8.5" cy="8.5" r="8.5" fill="#555"/><path d="M4.8 12.2 L11.8 5.2" stroke="#fff" stroke-width="2.6"/></svg>
<div class="t " style="left:481.5px;top:605.80px;font-size:15px;line-height:15px;color:#aaa;letter-spacing:0.3px;">Edit</div>
<svg class="r" style="left:531px;top:606px;" width="17" height="17" viewBox="0 0 17 17"><rect x="0" y="0" width="17" height="17" rx="3" fill="#1fb51f"/><rect x="3" y="3" width="5" height="5" rx="0.8" fill="#fff"/><rect x="9" y="3" width="5" height="5" rx="0.8" fill="#fff"/><rect x="3" y="9" width="5" height="5" rx="0.8" fill="#fff"/><rect x="9" y="9" width="5" height="5" rx="0.8" fill="#fff"/></svg>
<svg class="r" style="left:570px;top:606px;" width="17" height="17" viewBox="0 0 17 17"><circle cx="8.5" cy="8.5" r="8.5" fill="#1fb51f"/><text x="8.5" y="13" font-size="13" font-weight="700" font-family="Liberation Sans" text-anchor="middle" fill="#fff">$</text></svg>
<div class="t " style="left:593px;top:605.80px;font-size:15px;line-height:15px;color:#333;letter-spacing:0.1px;">Apply Insurance</div>
<svg class="r" style="left:724px;top:606px;" width="17" height="17" viewBox="0 0 17 17"><path d="M8.5 0 L10.5 2 L13.3 1.3 L14 4 L16.7 5 L16 7.8 L17 8.5 L16 10 L16.7 12 L14 13 L13.3 15.7 L10.5 15 L8.5 17 L6.5 15 L3.7 15.7 L3 13 L0.3 12 L1 9.5 L0 8.5 L1 7.5 L0.3 5 L3 4 L3.7 1.3 L6.5 2 Z" fill="#1fb51f"/><path d="M5.5 11.5 L11.5 5.5" stroke="#fff" stroke-width="1.4"/><circle cx="6" cy="6" r="1.3" fill="#fff"/><circle cx="11" cy="11" r="1.3" fill="#fff"/></svg>
<div class="t " style="left:746px;top:605.80px;font-size:15px;line-height:15px;color:#333;letter-spacing:0.1px;">Apply Promotion</div>
<div class="r" style="left:880px;top:600px;width:268px;height:26px;background:#fff;border-bottom:1px solid #cfcfcf"></div>
<div class="t " style="left:886.5px;top:605.30px;font-size:15px;line-height:15px;color:#333;letter-spacing:0.1px;">Enter BarCode</div>
<svg class="r" style="left:1124px;top:602px;" width="19" height="20" viewBox="0 0 19 20"><path d="M3 4.5 Q4 2.5 10 2 L16 2 Q18.3 2.5 17.8 5 L16 8.5 L17.3 16 Q17.3 18.5 15 18.5 L13 18.5 Q10.8 18 11.8 15.5 L12.3 13 L11.6 10.5 Q6 9 3.5 7 Z" fill="none" stroke="#333" stroke-width="1.2" stroke-linejoin="round"/><path d="M4 4.5 Q9.5 4.8 11.3 6.8 L12.2 10.5" fill="none" stroke="#333" stroke-width="1"/><rect x="1" y="13" width="1.7" height="5" fill="#333"/><rect x="4.3" y="13" width="1.7" height="5" fill="#333"/><rect x="7" y="13" width="1.5" height="5" fill="#333"/></svg>
<div class="r" style="left:275px;top:637px;width:1569px;height:1px;background:#d0d0d0;"></div>
<div class="r" style="left:275px;top:638px;width:1569px;height:29px;background:#f4f4f4;"></div>
<div class="r" style="left:275px;top:667px;width:1569px;height:1px;background:#bdbdbd;"></div>
<div class="r" style="left:301px;top:638px;width:1px;height:29px;background:#d2d2d2;"></div>
<div class="r" style="left:347px;top:638px;width:1px;height:29px;background:#d2d2d2;"></div>
<div class="r" style="left:393px;top:638px;width:1px;height:29px;background:#d2d2d2;"></div>
<div class="r" style="left:698px;top:638px;width:1px;height:29px;background:#d2d2d2;"></div>
<div class="r" style="left:808px;top:638px;width:1px;height:29px;background:#d2d2d2;"></div>
<div class="r" style="left:870px;top:638px;width:1px;height:29px;background:#d2d2d2;"></div>
<div class="r" style="left:1057px;top:638px;width:1px;height:29px;background:#d2d2d2;"></div>
<div class="r" style="left:1213px;top:638px;width:1px;height:29px;background:#d2d2d2;"></div>
<div class="r" style="left:1317px;top:638px;width:1px;height:29px;background:#d2d2d2;"></div>
<div class="r" style="left:1485px;top:638px;width:1px;height:29px;background:#d2d2d2;"></div>
<div class="r" style="left:1680px;top:638px;width:1px;height:29px;background:#d2d2d2;"></div>
<div class="t " style="left:401px;top:643.80px;font-size:15px;line-height:15px;color:#1f2a44;font-weight:700;letter-spacing:-0.1px;">Product</div>
<svg class="r" style="left:680px;top:645px;" width="9" height="13" viewBox="0 0 9 13"><circle cx="4.5" cy="4" r="3.8" fill="#aaa"/><circle cx="3.5" cy="3" r="1.2" fill="#ddd"/><rect x="3.8" y="7" width="1.4" height="6" fill="#aaa"/></svg>
<div class="t " style="left:706px;top:643.80px;font-size:15px;line-height:15px;color:#1f2a44;font-weight:700;letter-spacing:-0.1px;">Unit Price</div>
<svg class="r" style="left:790px;top:645px;" width="9" height="13" viewBox="0 0 9 13"><circle cx="4.5" cy="4" r="3.8" fill="#aaa"/><circle cx="3.5" cy="3" r="1.2" fill="#ddd"/><rect x="3.8" y="7" width="1.4" height="6" fill="#aaa"/></svg>
<div class="t " style="left:816px;top:643.80px;font-size:15px;line-height:15px;color:#1f2a44;font-weight:700;letter-spacing:-0.1px;">Qty</div>
<svg class="r" style="left:852px;top:645px;" width="9" height="13" viewBox="0 0 9 13"><circle cx="4.5" cy="4" r="3.8" fill="#aaa"/><circle cx="3.5" cy="3" r="1.2" fill="#ddd"/><rect x="3.8" y="7" width="1.4" height="6" fill="#aaa"/></svg>
<div class="t " style="left:878px;top:643.80px;font-size:15px;line-height:15px;color:#1f2a44;font-weight:700;letter-spacing:-0.1px;">Insurance Amount 1</div>
<svg class="r" style="left:1039px;top:645px;" width="9" height="13" viewBox="0 0 9 13"><circle cx="4.5" cy="4" r="3.8" fill="#aaa"/><circle cx="3.5" cy="3" r="1.2" fill="#ddd"/><rect x="3.8" y="7" width="1.4" height="6" fill="#aaa"/></svg>
<div class="t " style="left:1065px;top:643.80px;font-size:15px;line-height:15px;color:#1f2a44;font-weight:700;letter-spacing:-0.1px;">Patient Amount</div>
<svg class="r" style="left:1194px;top:645px;" width="9" height="13" viewBox="0 0 9 13"><circle cx="4.5" cy="4" r="3.8" fill="#aaa"/><circle cx="3.5" cy="3" r="1.2" fill="#ddd"/><rect x="3.8" y="7" width="1.4" height="6" fill="#aaa"/></svg>
<div class="t " style="left:1221px;top:643.80px;font-size:15px;line-height:15px;color:#1f2a44;font-weight:700;letter-spacing:-0.1px;">Tax Code</div>
<svg class="r" style="left:1298px;top:645px;" width="9" height="13" viewBox="0 0 9 13"><circle cx="4.5" cy="4" r="3.8" fill="#aaa"/><circle cx="3.5" cy="3" r="1.2" fill="#ddd"/><rect x="3.8" y="7" width="1.4" height="6" fill="#aaa"/></svg>
<div class="t " style="left:1325px;top:643.80px;font-size:15px;line-height:15px;color:#1f2a44;font-weight:700;letter-spacing:-0.1px;">Discount Amount</div>
<svg class="r" style="left:1466px;top:645px;" width="9" height="13" viewBox="0 0 9 13"><circle cx="4.5" cy="4" r="3.8" fill="#aaa"/><circle cx="3.5" cy="3" r="1.2" fill="#ddd"/><rect x="3.8" y="7" width="1.4" height="6" fill="#aaa"/></svg>
<div class="t " style="left:1492.5px;top:643.80px;font-size:15px;line-height:15px;color:#1f2a44;font-weight:700;letter-spacing:-0.1px;">Discount Percentage</div>
<svg class="r" style="left:1662px;top:645px;" width="9" height="13" viewBox="0 0 9 13"><circle cx="4.5" cy="4" r="3.8" fill="#aaa"/><circle cx="3.5" cy="3" r="1.2" fill="#ddd"/><rect x="3.8" y="7" width="1.4" height="6" fill="#aaa"/></svg>
<div class="t " style="left:1687px;top:643.80px;font-size:15px;line-height:15px;color:#1f2a44;font-weight:700;letter-spacing:-0.1px;">Amount With Tax</div>
<svg class="r" style="left:1825px;top:645px;" width="9" height="13" viewBox="0 0 9 13"><circle cx="4.5" cy="4" r="3.8" fill="#aaa"/><circle cx="3.5" cy="3" r="1.2" fill="#ddd"/><rect x="3.8" y="7" width="1.4" height="6" fill="#aaa"/></svg>
<svg class="r" style="left:317px;top:644px;" width="15" height="15" viewBox="0 0 15 15"><rect x="1" y="1" width="13" height="13" fill="#fff" stroke="#c8c8c8" stroke-width="2"/></svg>
<div class="r" style="left:275px;top:668px;width:1569px;height:25px;background:#dedede;"></div>
<svg class="r" style="left:281px;top:671px;" width="14" height="14" viewBox="0 0 14 14"><circle cx="7" cy="7" r="6.3" fill="none" stroke="#b4b4b4" stroke-width="1.1"/><path d="M4.5 4.5 L9 9 M9.2 5.5 V9.2 H5.5" fill="none" stroke="#aaa" stroke-width="1.2"/></svg>
<div class="t " style="left:309px;top:671.30px;font-size:15px;line-height:15px;color:#222;font-weight:700;letter-spacing:-0.3px;">Work Order: (Count=1)</div>
<div class="r" style="left:301px;top:693px;width:1543px;height:28px;background:#fff;"></div>
<div class="r" style="left:1680px;top:693px;width:164px;height:28px;background:#f0f0f0;"></div>
<div class="r" style="left:301px;top:720px;width:1543px;height:1px;background:#d2d2d2;"></div>
<div class="r" style="left:301px;top:693px;width:1px;height:28px;background:#d2d2d2;"></div>
<div class="r" style="left:347px;top:693px;width:1px;height:28px;background:#d2d2d2;"></div>
<div class="r" style="left:393px;top:693px;width:1px;height:28px;background:#d2d2d2;"></div>
<div class="r" style="left:698px;top:693px;width:1px;height:28px;background:#d2d2d2;"></div>
<div class="r" style="left:808px;top:693px;width:1px;height:28px;background:#d2d2d2;"></div>
<div class="r" style="left:870px;top:693px;width:1px;height:28px;background:#d2d2d2;"></div>
<div class="r" style="left:1057px;top:693px;width:1px;height:28px;background:#d2d2d2;"></div>
<div class="r" style="left:1213px;top:693px;width:1px;height:28px;background:#d2d2d2;"></div>
<div class="r" style="left:1317px;top:693px;width:1px;height:28px;background:#d2d2d2;"></div>
<div class="r" style="left:1485px;top:693px;width:1px;height:28px;background:#d2d2d2;"></div>
<div class="r" style="left:1680px;top:693px;width:1px;height:28px;background:#d2d2d2;"></div>
<svg class="r" style="left:317px;top:699.0px;" width="15" height="15" viewBox="0 0 15 15"><rect x="1" y="1" width="13" height="13" fill="#fff" stroke="#c8c8c8" stroke-width="2"/></svg>
<svg class="r" style="left:362px;top:698.0px;" width="17" height="17" viewBox="0 0 17 17"><circle cx="8.5" cy="8.5" r="8.5" fill="#1a55b5"/><path d="M4.8 12.2 L11.6 5.4" stroke="#fff" stroke-width="2.6" stroke-linecap="round"/><path d="M11 4.5 L12.5 6" stroke="#1a55b5" stroke-width="0.8"/></svg>
<div class="t " style="left:401px;top:697.30px;font-size:15px;line-height:15px;color:#222;letter-spacing:-0.25px;">ZEISS SmartLife Progressive Individual 3</div>
<div class="t" style="right:1051.5px;top:697.30px;font-size:15px;line-height:15px;color:#222;letter-spacing:-0.2px;letter-spacing:-0.5px">CAD 895.00</div>
<div class="t" style="right:989px;top:697.30px;font-size:15px;line-height:15px;color:#222;letter-spacing:-0.2px;">1</div>
<div class="t" style="right:802.5px;top:697.30px;font-size:15px;line-height:15px;color:#222;letter-spacing:-0.2px;">CAD 0.00</div>
<div class="t" style="right:647.5px;top:697.30px;font-size:15px;line-height:15px;color:#222;letter-spacing:-0.2px;">CAD 895.00</div>
<div class="t" style="right:374.5px;top:697.30px;font-size:15px;line-height:15px;color:#222;letter-spacing:-0.2px;">CAD 0.00</div>
<div class="t" style="right:179.5px;top:697.30px;font-size:15px;line-height:15px;color:#222;letter-spacing:-0.2px;">0.00%</div>
<div class="t" style="right:16px;top:697.30px;font-size:15px;line-height:15px;color:#222;letter-spacing:-0.2px;font-weight:700;color:#111">CAD 895.00</div>
<div class="r" style="left:275px;top:721px;width:1569px;height:25px;background:#dedede;"></div>
<svg class="r" style="left:281px;top:724px;" width="14" height="14" viewBox="0 0 14 14"><circle cx="7" cy="7" r="6.3" fill="none" stroke="#b4b4b4" stroke-width="1.1"/><path d="M4.5 4.5 L9 9 M9.2 5.5 V9.2 H5.5" fill="none" stroke="#aaa" stroke-width="1.2"/></svg>
<div class="t " style="left:309px;top:724.30px;font-size:15px;line-height:15px;color:#222;font-weight:700;letter-spacing:-0.12px;">Work Order: Rx000186 (Count=4)</div>
<div class="r" style="left:301px;top:745px;width:1543px;height:1px;background:#d2d2d2;"></div>
<div class="r" style="left:301px;top:746px;width:1543px;height:28px;background:#fff;"></div>
<div class="r" style="left:1680px;top:746px;width:164px;height:28px;background:#f0f0f0;"></div>
<div class="r" style="left:301px;top:773px;width:1543px;height:1px;background:#d2d2d2;"></div>
<div class="r" style="left:301px;top:746px;width:1px;height:28px;background:#d2d2d2;"></div>
<div class="r" style="left:347px;top:746px;width:1px;height:28px;background:#d2d2d2;"></div>
<div class="r" style="left:393px;top:746px;width:1px;height:28px;background:#d2d2d2;"></div>
<div class="r" style="left:698px;top:746px;width:1px;height:28px;background:#d2d2d2;"></div>
<div class="r" style="left:808px;top:746px;width:1px;height:28px;background:#d2d2d2;"></div>
<div class="r" style="left:870px;top:746px;width:1px;height:28px;background:#d2d2d2;"></div>
<div class="r" style="left:1057px;top:746px;width:1px;height:28px;background:#d2d2d2;"></div>
<div class="r" style="left:1213px;top:746px;width:1px;height:28px;background:#d2d2d2;"></div>
<div class="r" style="left:1317px;top:746px;width:1px;height:28px;background:#d2d2d2;"></div>
<div class="r" style="left:1485px;top:746px;width:1px;height:28px;background:#d2d2d2;"></div>
<div class="r" style="left:1680px;top:746px;width:1px;height:28px;background:#d2d2d2;"></div>
<svg class="r" style="left:317px;top:752.0px;" width="15" height="15" viewBox="0 0 15 15"><rect x="1" y="1" width="13" height="13" fill="#fff" stroke="#c8c8c8" stroke-width="2"/></svg>
<svg class="r" style="left:362px;top:751.0px;" width="17" height="17" viewBox="0 0 17 17"><circle cx="8.5" cy="8.5" r="8.5" fill="#1a55b5"/><path d="M4.8 12.2 L11.6 5.4" stroke="#fff" stroke-width="2.6" stroke-linecap="round"/><path d="M11 4.5 L12.5 6" stroke="#1a55b5" stroke-width="0.8"/></svg>
<div class="t " style="left:401px;top:750.30px;font-size:15px;line-height:15px;color:#222;letter-spacing:-0.25px;">Burberry 0BE1287TD 1002 A:55</div>
<div class="t" style="right:1051.5px;top:750.30px;font-size:15px;line-height:15px;color:#222;letter-spacing:-0.2px;letter-spacing:-0.5px">CAD 315.00</div>
<div class="t" style="right:989px;top:750.30px;font-size:15px;line-height:15px;color:#222;letter-spacing:-0.2px;">1</div>
<div class="t" style="right:802.5px;top:750.30px;font-size:15px;line-height:15px;color:#222;letter-spacing:-0.2px;">CAD 200.00</div>
<div class="t" style="right:647.5px;top:750.30px;font-size:15px;line-height:15px;color:#222;letter-spacing:-0.2px;">CAD 15.00</div>
<div class="t" style="right:374.5px;top:750.30px;font-size:15px;line-height:15px;color:#222;letter-spacing:-0.2px;">CAD 0.00</div>
<div class="t" style="right:179.5px;top:750.30px;font-size:15px;line-height:15px;color:#222;letter-spacing:-0.2px;">0.00%</div>
<div class="t" style="right:16px;top:750.30px;font-size:15px;line-height:15px;color:#222;letter-spacing:-0.2px;font-weight:700;color:#111">CAD 315.00</div>
<div class="r" style="left:301px;top:774px;width:1543px;height:28px;background:#fff;"></div>
<div class="r" style="left:1680px;top:774px;width:164px;height:28px;background:#f0f0f0;"></div>
<div class="r" style="left:301px;top:801px;width:1543px;height:1px;background:#d2d2d2;"></div>
<div class="r" style="left:301px;top:774px;width:1px;height:28px;background:#d2d2d2;"></div>
<div class="r" style="left:347px;top:774px;width:1px;height:28px;background:#d2d2d2;"></div>
<div class="r" style="left:393px;top:774px;width:1px;height:28px;background:#d2d2d2;"></div>
<div class="r" style="left:698px;top:774px;width:1px;height:28px;background:#d2d2d2;"></div>
<div class="r" style="left:808px;top:774px;width:1px;height:28px;background:#d2d2d2;"></div>
<div class="r" style="left:870px;top:774px;width:1px;height:28px;background:#d2d2d2;"></div>
<div class="r" style="left:1057px;top:774px;width:1px;height:28px;background:#d2d2d2;"></div>
<div class="r" style="left:1213px;top:774px;width:1px;height:28px;background:#d2d2d2;"></div>
<div class="r" style="left:1317px;top:774px;width:1px;height:28px;background:#d2d2d2;"></div>
<div class="r" style="left:1485px;top:774px;width:1px;height:28px;background:#d2d2d2;"></div>
<div class="r" style="left:1680px;top:774px;width:1px;height:28px;background:#d2d2d2;"></div>
<svg class="r" style="left:317px;top:780.0px;" width="15" height="15" viewBox="0 0 15 15"><rect x="1" y="1" width="13" height="13" fill="#fff" stroke="#c8c8c8" stroke-width="2"/></svg>
<svg class="r" style="left:362px;top:779.0px;" width="17" height="17" viewBox="0 0 17 17"><circle cx="8.5" cy="8.5" r="8.5" fill="#1a55b5"/><path d="M4.8 12.2 L11.6 5.4" stroke="#fff" stroke-width="2.6" stroke-linecap="round"/><path d="M11 4.5 L12.5 6" stroke="#1a55b5" stroke-width="0.8"/></svg>
<div class="t " style="left:401px;top:778.30px;font-size:15px;line-height:15px;color:#222;letter-spacing:-0.25px;">K&amp;R Jena Office Serenity</div>
<div class="t" style="right:1051.5px;top:778.30px;font-size:15px;line-height:15px;color:#222;letter-spacing:-0.2px;letter-spacing:-0.5px">CAD 0.00</div>
<div class="t" style="right:989px;top:778.30px;font-size:15px;line-height:15px;color:#222;letter-spacing:-0.2px;">1</div>
<div class="t" style="right:802.5px;top:778.30px;font-size:15px;line-height:15px;color:#222;letter-spacing:-0.2px;">CAD 0.00</div>
<div class="t" style="right:647.5px;top:778.30px;font-size:15px;line-height:15px;color:#222;letter-spacing:-0.2px;">CAD 0.00</div>
<div class="t" style="right:374.5px;top:778.30px;font-size:15px;line-height:15px;color:#222;letter-spacing:-0.2px;">CAD 0.00</div>
<div class="t" style="right:179.5px;top:778.30px;font-size:15px;line-height:15px;color:#222;letter-spacing:-0.2px;">0.00%</div>
<div class="t" style="right:16px;top:778.30px;font-size:15px;line-height:15px;color:#222;letter-spacing:-0.2px;font-weight:700;color:#111">CAD 0.00</div>
<div class="r" style="left:301px;top:802px;width:1543px;height:28px;background:#fff;"></div>
<div class="r" style="left:1680px;top:802px;width:164px;height:28px;background:#f0f0f0;"></div>
<div class="r" style="left:301px;top:829px;width:1543px;height:1px;background:#d2d2d2;"></div>
<div class="r" style="left:301px;top:802px;width:1px;height:28px;background:#d2d2d2;"></div>
<div class="r" style="left:347px;top:802px;width:1px;height:28px;background:#d2d2d2;"></div>
<div class="r" style="left:393px;top:802px;width:1px;height:28px;background:#d2d2d2;"></div>
<div class="r" style="left:698px;top:802px;width:1px;height:28px;background:#d2d2d2;"></div>
<div class="r" style="left:808px;top:802px;width:1px;height:28px;background:#d2d2d2;"></div>
<div class="r" style="left:870px;top:802px;width:1px;height:28px;background:#d2d2d2;"></div>
<div class="r" style="left:1057px;top:802px;width:1px;height:28px;background:#d2d2d2;"></div>
<div class="r" style="left:1213px;top:802px;width:1px;height:28px;background:#d2d2d2;"></div>
<div class="r" style="left:1317px;top:802px;width:1px;height:28px;background:#d2d2d2;"></div>
<div class="r" style="left:1485px;top:802px;width:1px;height:28px;background:#d2d2d2;"></div>
<div class="r" style="left:1680px;top:802px;width:1px;height:28px;background:#d2d2d2;"></div>
<svg class="r" style="left:317px;top:808.0px;" width="15" height="15" viewBox="0 0 15 15"><rect x="1" y="1" width="13" height="13" fill="#fff" stroke="#c8c8c8" stroke-width="2"/></svg>
<svg class="r" style="left:362px;top:807.0px;" width="17" height="17" viewBox="0 0 17 17"><circle cx="8.5" cy="8.5" r="8.5" fill="#1a55b5"/><path d="M4.8 12.2 L11.6 5.4" stroke="#fff" stroke-width="2.6" stroke-linecap="round"/><path d="M11 4.5 L12.5 6" stroke="#1a55b5" stroke-width="0.8"/></svg>
<div class="t " style="left:401px;top:806.30px;font-size:15px;line-height:15px;color:#222;letter-spacing:-0.9px;">ACCESSORIES</div>
<div class="t" style="right:1051.5px;top:806.30px;font-size:15px;line-height:15px;color:#222;letter-spacing:-0.2px;letter-spacing:-0.5px">CAD 0.00</div>
<div class="t" style="right:989px;top:806.30px;font-size:15px;line-height:15px;color:#222;letter-spacing:-0.2px;">1</div>
<div class="t" style="right:802.5px;top:806.30px;font-size:15px;line-height:15px;color:#222;letter-spacing:-0.2px;">CAD 0.00</div>
<div class="t" style="right:647.5px;top:806.30px;font-size:15px;line-height:15px;color:#222;letter-spacing:-0.2px;">CAD 0.00</div>
<div class="t" style="right:374.5px;top:806.30px;font-size:15px;line-height:15px;color:#222;letter-spacing:-0.2px;">CAD 0.00</div>
<div class="t" style="right:179.5px;top:806.30px;font-size:15px;line-height:15px;color:#222;letter-spacing:-0.2px;">0.00%</div>
<div class="t" style="right:16px;top:806.30px;font-size:15px;line-height:15px;color:#222;letter-spacing:-0.2px;font-weight:700;color:#111">CAD 0.00</div>
<div class="r" style="left:301px;top:830px;width:1543px;height:27px;background:#fff;"></div>
<div class="r" style="left:1680px;top:830px;width:164px;height:27px;background:#f0f0f0;"></div>
<div class="r" style="left:301px;top:856px;width:1543px;height:1px;background:#d2d2d2;"></div>
<div class="r" style="left:301px;top:830px;width:1px;height:27px;background:#d2d2d2;"></div>
<div class="r" style="left:347px;top:830px;width:1px;height:27px;background:#d2d2d2;"></div>
<div class="r" style="left:393px;top:830px;width:1px;height:27px;background:#d2d2d2;"></div>
<div class="r" style="left:698px;top:830px;width:1px;height:27px;background:#d2d2d2;"></div>
<div class="r" style="left:808px;top:830px;width:1px;height:27px;background:#d2d2d2;"></div>
<div class="r" style="left:870px;top:830px;width:1px;height:27px;background:#d2d2d2;"></div>
<div class="r" style="left:1057px;top:830px;width:1px;height:27px;background:#d2d2d2;"></div>
<div class="r" style="left:1213px;top:830px;width:1px;height:27px;background:#d2d2d2;"></div>
<div class="r" style="left:1317px;top:830px;width:1px;height:27px;background:#d2d2d2;"></div>
<div class="r" style="left:1485px;top:830px;width:1px;height:27px;background:#d2d2d2;"></div>
<div class="r" style="left:1680px;top:830px;width:1px;height:27px;background:#d2d2d2;"></div>
<svg class="r" style="left:317px;top:835.5px;" width="15" height="15" viewBox="0 0 15 15"><rect x="1" y="1" width="13" height="13" fill="#fff" stroke="#c8c8c8" stroke-width="2"/></svg>
<svg class="r" style="left:362px;top:834.5px;" width="17" height="17" viewBox="0 0 17 17"><circle cx="8.5" cy="8.5" r="8.5" fill="#1a55b5"/><path d="M4.8 12.2 L11.6 5.4" stroke="#fff" stroke-width="2.6" stroke-linecap="round"/><path d="M11 4.5 L12.5 6" stroke="#1a55b5" stroke-width="0.8"/></svg>
<div class="t " style="left:401px;top:833.80px;font-size:15px;line-height:15px;color:#222;letter-spacing:-0.8px;">AR</div>
<div class="t" style="right:1051.5px;top:833.80px;font-size:15px;line-height:15px;color:#222;letter-spacing:-0.2px;letter-spacing:-0.5px">CAD 125.00</div>
<div class="t" style="right:989px;top:833.80px;font-size:15px;line-height:15px;color:#222;letter-spacing:-0.2px;">1</div>
<div class="t" style="right:802.5px;top:833.80px;font-size:15px;line-height:15px;color:#222;letter-spacing:-0.2px;">CAD 0.00</div>
<div class="t" style="right:647.5px;top:833.80px;font-size:15px;line-height:15px;color:#222;letter-spacing:-0.2px;">CAD 125.00</div>
<div class="t" style="right:374.5px;top:833.80px;font-size:15px;line-height:15px;color:#222;letter-spacing:-0.2px;">CAD 0.00</div>
<div class="t" style="right:179.5px;top:833.80px;font-size:15px;line-height:15px;color:#222;letter-spacing:-0.2px;">0.00%</div>
<div class="t" style="right:16px;top:833.80px;font-size:15px;line-height:15px;color:#222;letter-spacing:-0.2px;font-weight:700;color:#111">CAD 125.00</div>
<div class="r" style="left:275px;top:856px;width:1569px;height:1px;background:#cfcfcf;"></div>
<div class="t " style="left:300px;top:872.12px;font-size:14.5px;line-height:14.5px;color:#333;letter-spacing:-0.2px;">Page 1 of 1 (7 items)</div>
<svg class="r" style="left:455px;top:867px;" width="25" height="25" viewBox="0 0 25 25"><circle cx="12.5" cy="12.5" r="11.5" fill="#fff" stroke="#ddd" stroke-width="1.5"/><path d="M14 8.5 L10 12.5 L14 16.5 Z" fill="#ccc"/></svg>
<div class="r" style="left:488px;top:869px;width:36px;height:21px;border-radius:11px;background:#1f2a44"></div>
<div class="t " style="left:488px;top:871.72px;font-size:14.5px;line-height:14.5px;color:#fff;width:36px;text-align:center">1</div>
<svg class="r" style="left:532px;top:867px;" width="25" height="25" viewBox="0 0 25 25"><circle cx="12.5" cy="12.5" r="11.5" fill="#fff" stroke="#ddd" stroke-width="1.5"/><path d="M11 8.5 L15 12.5 L11 16.5 Z" fill="#ccc"/></svg>
<div class="t " style="left:1709px;top:871.72px;font-size:14.5px;line-height:14.5px;color:#333;">Page size:</div>
<div class="r" style="left:1779px;top:865px;width:50px;height:28px;border:1px solid #d6d6d6;background:#fff"></div>
<div class="t " style="left:1784px;top:873.30px;font-size:15px;line-height:15px;color:#111;">200</div>
<svg class="r" style="left:1815px;top:877px;" width="8" height="5" viewBox="0 0 8 5"><path d="M0 0 H8 L4 5 Z" fill="#777"/></svg>
</body></html>
